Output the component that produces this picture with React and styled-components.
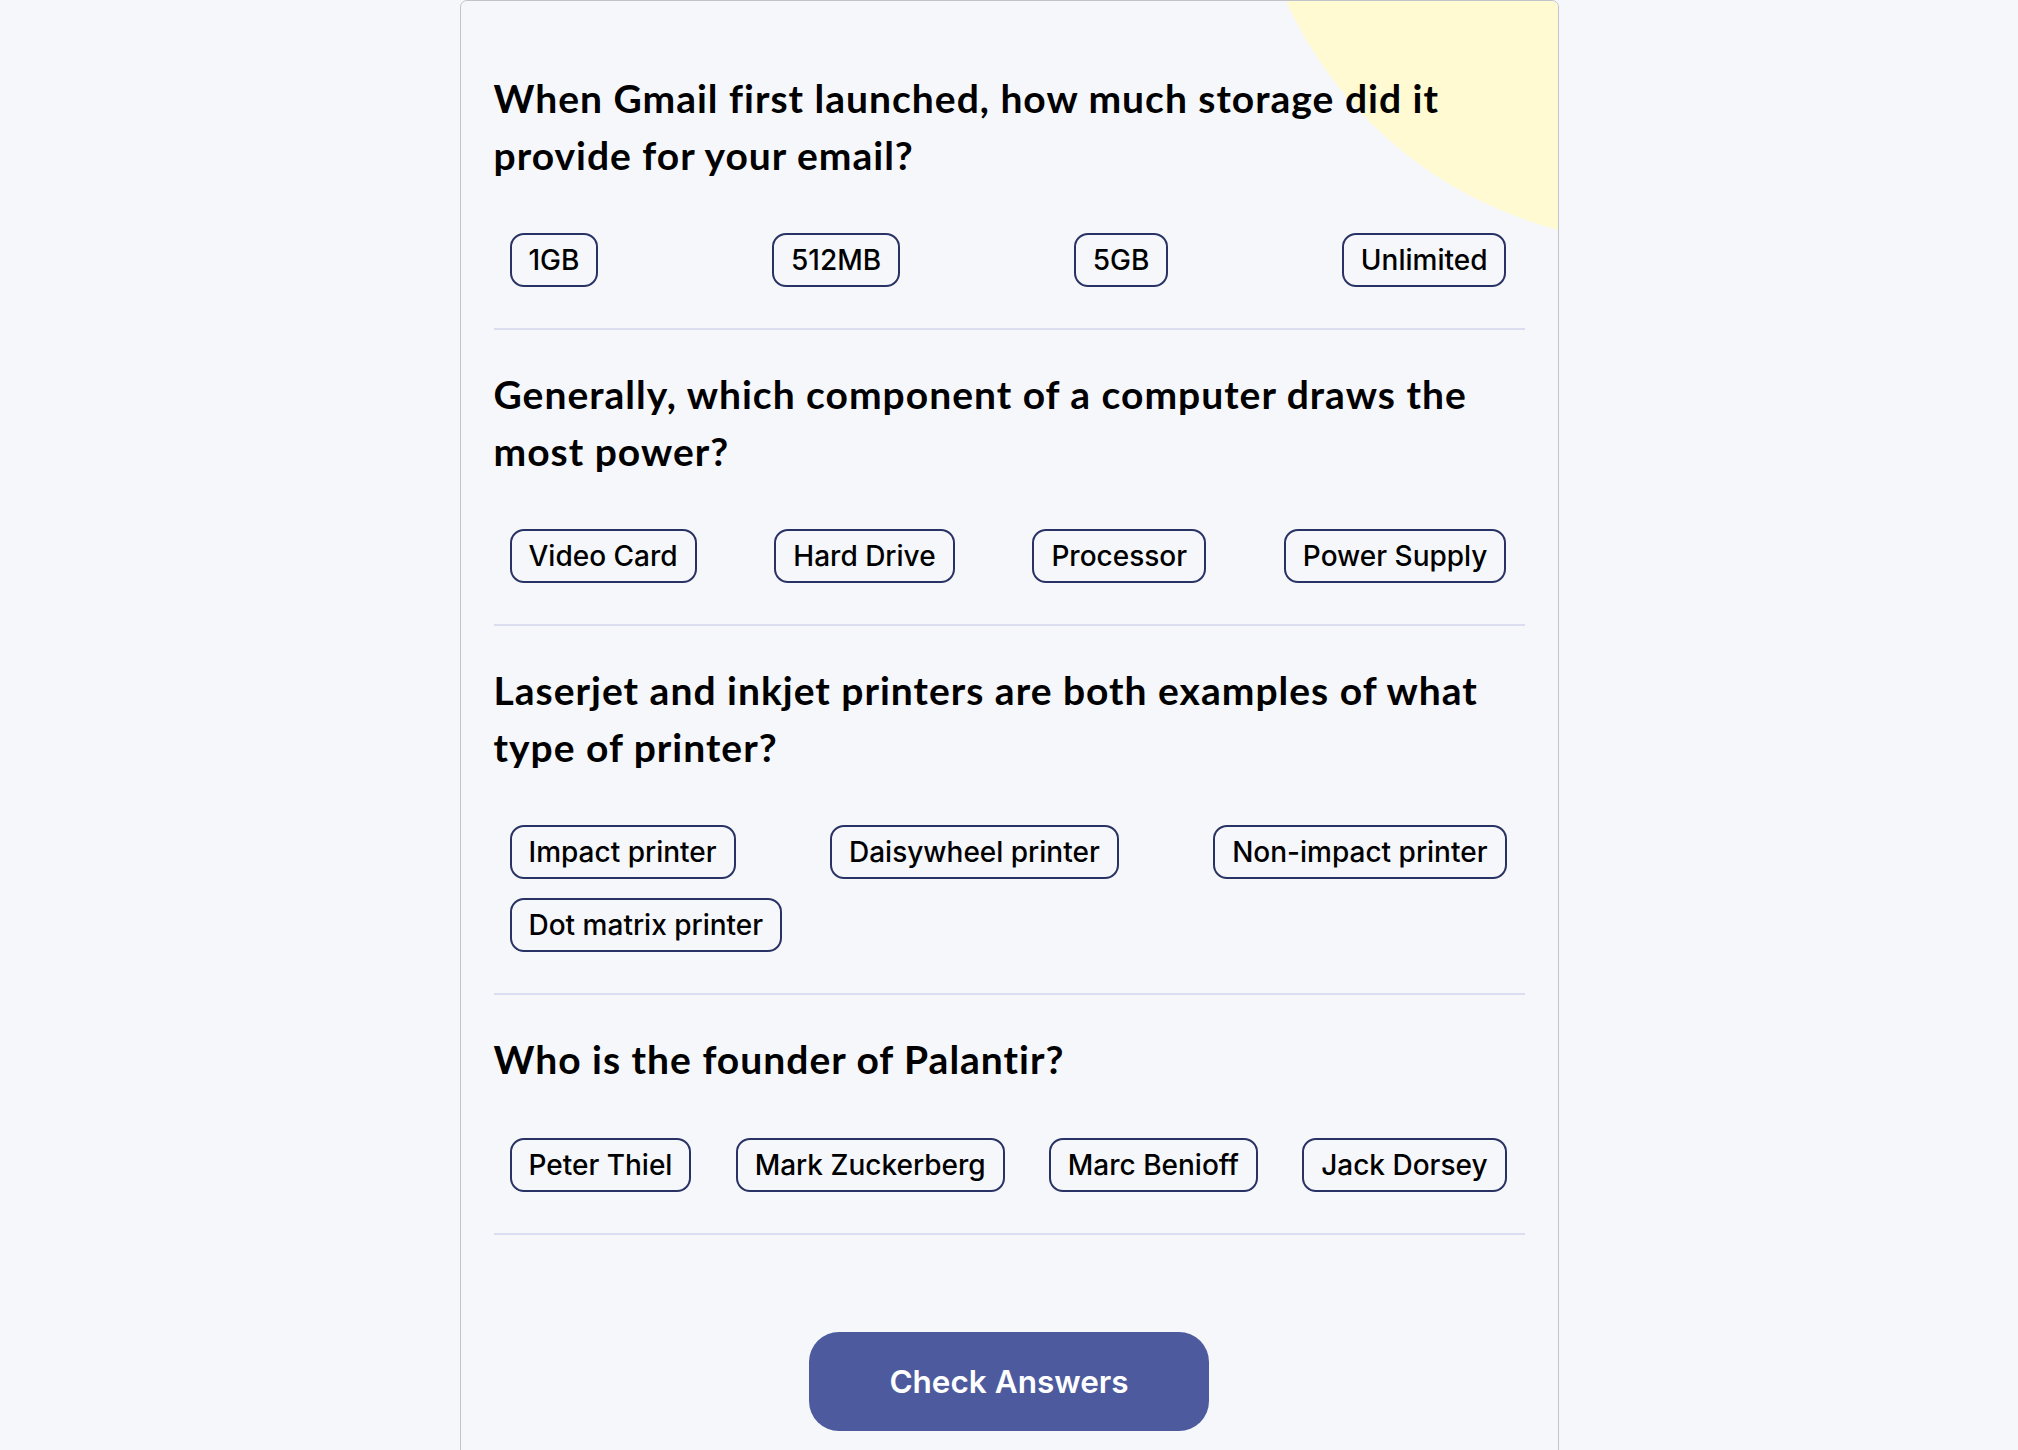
import React from "react";
import styled, { createGlobalStyle } from "styled-components";

const GlobalStyle = createGlobalStyle`
  html, body {
    margin: 0;
    padding: 0;
    background: #f5f7fb;
  }
  body {
    font-family: Inter, "Liberation Sans", sans-serif;
    color: #000;
  }
`;

const Page = styled.main`
  display: flex;
  justify-content: center;
  min-height: 1450px;
  overflow: hidden;
`;

const Card = styled.section`
  position: relative;
  overflow: hidden;
  box-sizing: border-box;
  width: 1099px;
  min-height: 1500px;
  padding: 0 33px;
  background: #f5f7fb;
  border: 1.5px solid #c3c4ca;
  border-radius: 7px;
`;

const Blob = styled.div`
  position: absolute;
  left: 788px;
  top: -584px;
  width: 826px;
  height: 826px;
  border-radius: 50%;
  background: #fffad1;
  pointer-events: none;
`;

const Content = styled.div`
  position: relative;
  display: flex;
  flex-direction: column;
  align-items: stretch;
`;

const QuestionBlock = styled.div`
  padding: ${(p) => (p.$first ? "69px" : "36px")} 0 41px;
  border-bottom: 2px solid #dbdef0;
`;

const Question = styled.h2`
  margin: 0;
  font-family: Lato, "Open Sans", sans-serif;
  font-weight: 700;
  font-size: 39px;
  line-height: 56.5px;
  letter-spacing: 1px;
  color: #000;
`;

const Options = styled.div`
  display: flex;
  flex-wrap: wrap;
  justify-content: space-between;
  row-gap: 19px;
  column-gap: 20px;
  margin-top: 50px;
  padding: 0 18px 0 16px;
`;

const Option = styled.button`
  box-sizing: border-box;
  height: 54px;
  padding: 0 17px;
  border: 2px solid #293264;
  border-radius: 14px;
  background: transparent;
  font-family: Inter, sans-serif;
  font-weight: 500;
  font-size: 28px;
  line-height: 50px;
  color: #000;
  cursor: pointer;
`;

const Footer = styled.div`
  display: flex;
  justify-content: center;
  padding-top: 97px;
`;

const CheckButton = styled.button`
  width: 400px;
  height: 99px;
  border: none;
  border-radius: 30px;
  background: #4d5b9e;
  color: #fff;
  font-family: Inter, sans-serif;
  font-weight: 600;
  font-size: 31.5px;
  cursor: pointer;
`;

const questions = [
  {
    q: "When Gmail first launched, how much storage did it provide for your email?",
    a: ["1GB", "512MB", "5GB", "Unlimited"],
  },
  {
    q: "Generally, which component of a computer draws the most power?",
    a: ["Video Card", "Hard Drive", "Processor", "Power Supply"],
  },
  {
    q: "Laserjet and inkjet printers are both examples of what type of printer?",
    a: ["Impact printer", "Daisywheel printer", "Non-impact printer", "Dot matrix printer"],
  },
  {
    q: "Who is the founder of Palantir?",
    a: ["Peter Thiel", "Mark Zuckerberg", "Marc Benioff", "Jack Dorsey"],
  },
];

export default function App() {
  return (
    <>
      <GlobalStyle />
      <Page>
        <Card>
          <Blob />
          <Content>
            {questions.map((item, i) => (
              <QuestionBlock key={i} $first={i === 0}>
                <Question>{item.q}</Question>
                <Options>
                  {item.a.map((ans) => (
                    <Option key={ans}>{ans}</Option>
                  ))}
                </Options>
              </QuestionBlock>
            ))}
            <Footer>
              <CheckButton>Check Answers</CheckButton>
            </Footer>
          </Content>
        </Card>
      </Page>
    </>
  );
}
